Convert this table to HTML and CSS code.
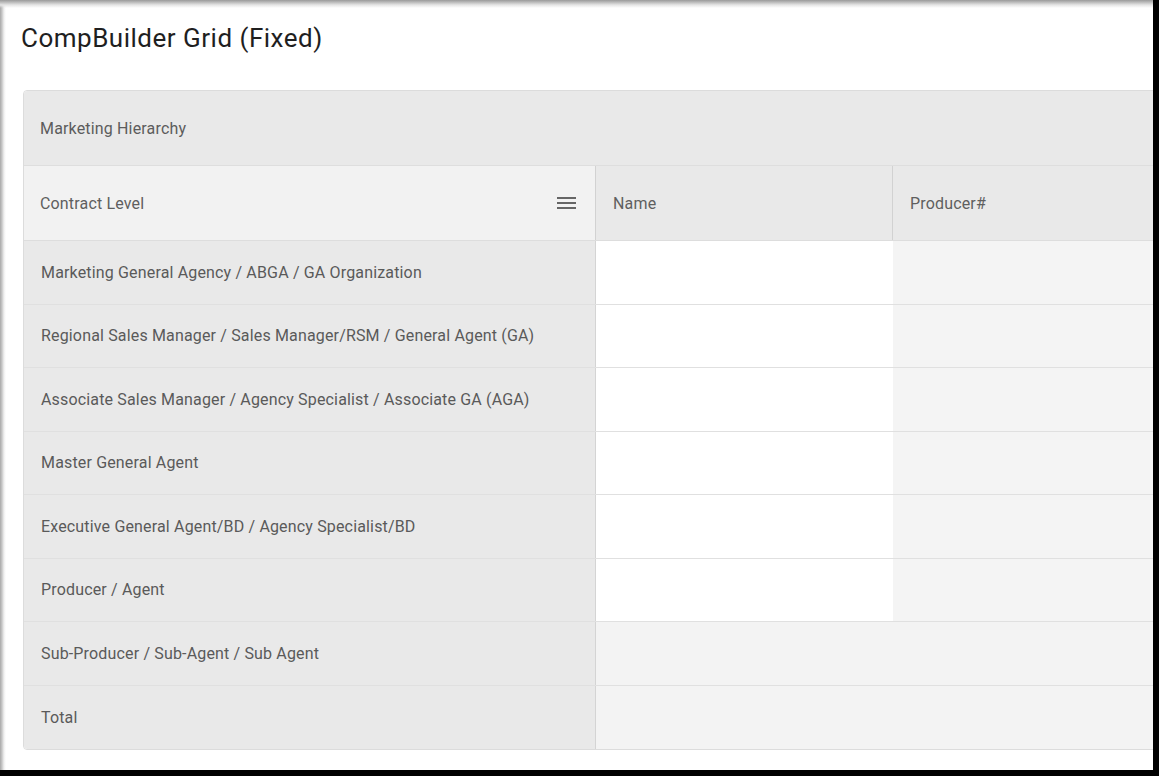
FILE: index.html
```html
<!DOCTYPE html>
<html lang="en">
<head>
<meta charset="utf-8">
<title>CompBuilder Grid (Fixed)</title>
<link rel="stylesheet" href="styles.css">
</head>
<body>
<div class="window">
  <h1 class="title">CompBuilder Grid (Fixed)</h1>
  <div class="grid">
    <div class="group-row">Marketing Hierarchy</div>
    <div class="head-row">
      <div class="hcell pinned">
        <span>Contract Level</span>
        <svg class="menu-icon" width="19" height="12" viewBox="0 0 19 12" aria-hidden="true"><rect x="0" y="0" width="19" height="2"/><rect x="0" y="5" width="19" height="2"/><rect x="0" y="10" width="19" height="2"/></svg>
      </div>
      <div class="hcell name">Name</div>
      <div class="hcell producer">Producer#</div>
    </div>
    <div class="row"><div class="cell pinned">Marketing General Agency / ABGA / GA Organization</div><div class="cell name"></div><div class="cell producer"></div></div>
    <div class="row"><div class="cell pinned">Regional Sales Manager / Sales Manager/RSM / General Agent (GA)</div><div class="cell name"></div><div class="cell producer"></div></div>
    <div class="row"><div class="cell pinned">Associate Sales Manager / Agency Specialist / Associate GA (AGA)</div><div class="cell name"></div><div class="cell producer"></div></div>
    <div class="row"><div class="cell pinned">Master General Agent</div><div class="cell name"></div><div class="cell producer"></div></div>
    <div class="row"><div class="cell pinned">Executive General Agent/BD / Agency Specialist/BD</div><div class="cell name"></div><div class="cell producer"></div></div>
    <div class="row"><div class="cell pinned">Producer / Agent</div><div class="cell name"></div><div class="cell producer"></div></div>
    <div class="row"><div class="cell pinned">Sub-Producer / Sub-Agent / Sub Agent</div><div class="cell span"></div></div>
    <div class="row last"><div class="cell pinned">Total</div><div class="cell span"></div></div>
  </div>
</div>
</body>
</html>
```
FILE: styles.css
```css
* { box-sizing: border-box; }
html, body { margin: 0; padding: 0; }
body {
  background: #000;
  font-family: Roboto, "Noto Sans", Arial, sans-serif;
}
.window {
  width: 1153px;
  height: 770px;
  overflow: hidden;
  background:
    linear-gradient(to bottom, #9a9a9a 0, #b8b8b8 2px, #e6e6e6 5px, rgba(255,255,255,0) 8px) top left / 100% 8px no-repeat,
    linear-gradient(to right, #a8a8a8 0, #c8c8c8 2px, #f0f0f0 4px, rgba(255,255,255,0) 6px) top left / 6px 100% no-repeat,
    #fff;
  padding-top: 23px;
}
.title {
  margin: 0 0 37px 21px;
  font-size: 26px;
  line-height: 30px;
  letter-spacing: 0.5px;
  font-weight: 400;
  color: #1f1f1f;
}
.grid {
  margin-left: 23px;
  width: 1400px;
  border: 1px solid #dcdcdc;
  border-radius: 4px;
  overflow: hidden;
  font-size: 16px;
  letter-spacing: 0.16px;
}
.group-row {
  height: 75px;
  background: #e9e9e9;
  border-bottom: 1px solid #dedede;
  display: flex;
  align-items: center;
  padding-left: 16px;
  color: #5c5c5c;
}
.head-row {
  height: 75px;
  display: flex;
  border-bottom: 1px solid #dddddd;
  color: #5f5f5f;
}
.hcell {
  display: flex;
  align-items: center;
  padding-left: 16px;
  background: #e9e9e9;
}
.hcell.pinned {
  width: 572px;
  background: #f2f2f2;
  border-right: 1px solid #d2d2d2;
  justify-content: space-between;
  padding-right: 19px;
}
.hcell.name {
  width: 297px;
  padding-left: 17px;
  border-right: 1px solid #d2d2d2;
}
.hcell.producer {
  flex: 1;
  padding-left: 17px;
}
.menu-icon { fill: #666; display: block; }
.row {
  height: 63.5px;
  display: flex;
  border-bottom: 1px solid #e0e0e0;
  color: #5a5a5a;
}
.row.last { border-bottom: 0; }
.cell {
  display: flex;
  align-items: center;
}
.cell.pinned {
  width: 572px;
  background: #e9e9e9;
  border-right: 1px solid #d4d4d4;
  padding-left: 17px;
}
.cell.name {
  width: 297px;
  background: #fff;
}
.cell.producer {
  flex: 1;
  background: #f4f4f4;
}
.cell.span {
  flex: 1;
  background: #f3f3f3;
}
```
